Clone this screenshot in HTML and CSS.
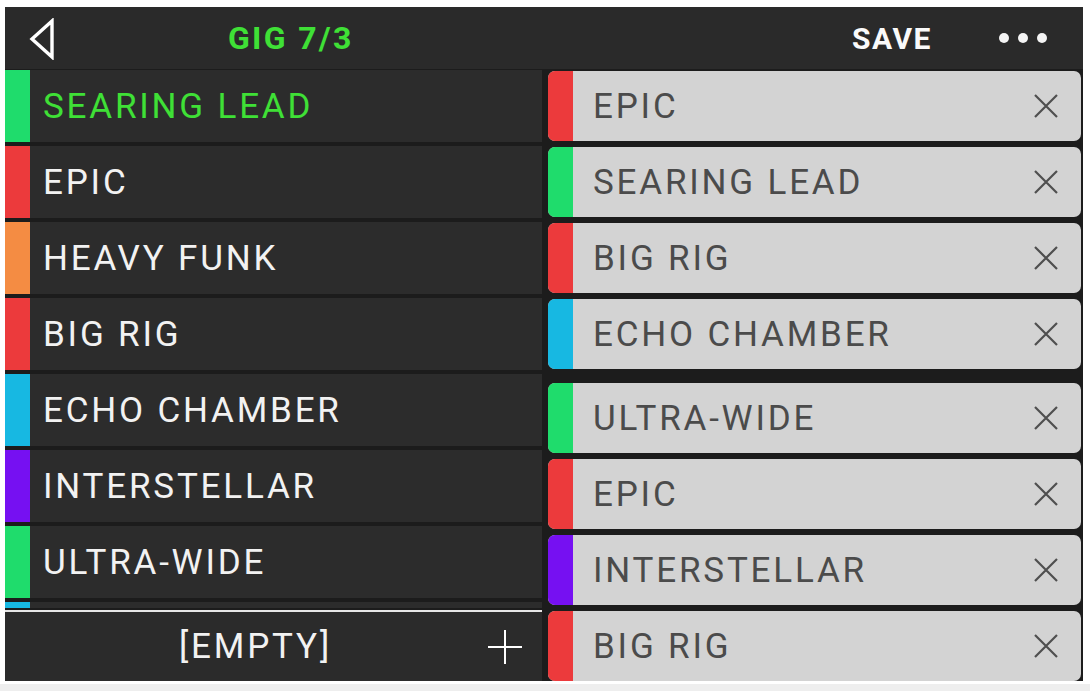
FILE: index.html
```html
<!DOCTYPE html>
<html>
<head>
<meta charset="utf-8">
<link rel="stylesheet" href="styles.css">
</head>
<body>
<div class="device">
  <header class="topbar">
    <div class="back">
      <svg width="28" height="42" viewBox="0 0 28 42"><path d="M24 3 L4 21 L24 39 Z" fill="none" stroke="#fff" stroke-width="3.4" stroke-linejoin="miter"/></svg>
    </div>
    <div class="title">GIG 7/3</div>
    <div class="save">SAVE</div>
    <div class="more"><span></span><span></span><span></span></div>
  </header>
  <main class="content">
    <section class="left">
      <div class="list">
        <div class="row active"><i class="bar green"></i><span>SEARING LEAD</span></div>
        <div class="row"><i class="bar red"></i><span>EPIC</span></div>
        <div class="row"><i class="bar orange"></i><span>HEAVY FUNK</span></div>
        <div class="row"><i class="bar red"></i><span>BIG RIG</span></div>
        <div class="row"><i class="bar cyan"></i><span>ECHO CHAMBER</span></div>
        <div class="row"><i class="bar purple"></i><span>INTERSTELLAR</span></div>
        <div class="row"><i class="bar green"></i><span>ULTRA-WIDE</span></div>
        <div class="row"><i class="bar cyan"></i></div>
      </div>
      <div class="divider"></div>
      <div class="add">
        <span class="empty">[EMPTY]</span>
        <svg class="plus" width="36" height="36" viewBox="0 0 36 36"><path d="M18 1 V35 M1 18 H35" stroke="#fff" stroke-width="2"/></svg>
      </div>
    </section>
    <section class="right">
      <div class="card"><i class="bar red"></i><span>EPIC</span><svg class="x" viewBox="0 0 26 26"><path d="M2 2 L24 24 M24 2 L2 24"/></svg></div>
      <div class="card"><i class="bar green"></i><span>SEARING LEAD</span><svg class="x" viewBox="0 0 26 26"><path d="M2 2 L24 24 M24 2 L2 24"/></svg></div>
      <div class="card"><i class="bar red"></i><span>BIG RIG</span><svg class="x" viewBox="0 0 26 26"><path d="M2 2 L24 24 M24 2 L2 24"/></svg></div>
      <div class="card"><i class="bar cyan"></i><span>ECHO CHAMBER</span><svg class="x" viewBox="0 0 26 26"><path d="M2 2 L24 24 M24 2 L2 24"/></svg></div>
      <div class="card spaced"><i class="bar green"></i><span>ULTRA-WIDE</span><svg class="x" viewBox="0 0 26 26"><path d="M2 2 L24 24 M24 2 L2 24"/></svg></div>
      <div class="card"><i class="bar red"></i><span>EPIC</span><svg class="x" viewBox="0 0 26 26"><path d="M2 2 L24 24 M24 2 L2 24"/></svg></div>
      <div class="card"><i class="bar purple"></i><span>INTERSTELLAR</span><svg class="x" viewBox="0 0 26 26"><path d="M2 2 L24 24 M24 2 L2 24"/></svg></div>
      <div class="card"><i class="bar red"></i><span>BIG RIG</span><svg class="x" viewBox="0 0 26 26"><path d="M2 2 L24 24 M24 2 L2 24"/></svg></div>
    </section>
  </main>
</div>
<div class="footer-strip"></div>
</body>
</html>
```
FILE: styles.css
```css
* { box-sizing: border-box; }
html, body { margin: 0; padding: 0; }
body {
  background: #ffffff;
  width: 1090px;
  height: 691px;
  overflow: hidden;
  font-family: Roboto, "Liberation Sans", sans-serif;
}
.device {
  margin: 7px 7px 0 5px;
  width: 1078px;
  height: 674px;
  background: #1c1c1c;
  display: flex;
  flex-direction: column;
}
.footer-strip {
  margin-top: 3px;
  height: 7px;
  background: #eeeeee;
}
.topbar {
  height: 62px;
  background: #2a2a2a;
  display: flex;
  align-items: center;
  flex-shrink: 0;
}
.back {
  width: 28px;
  margin-left: 23px;
  display: flex;
  align-items: center;
  padding-top: 2px;
}
.title {
  margin-left: 172px;
  color: #3fe036;
  font-weight: 700;
  font-size: 32px;
  letter-spacing: 2.3px;
}
.save {
  margin-left: auto;
  color: #fafafa;
  font-weight: 700;
  font-size: 30px;
  letter-spacing: 1.5px;
}
.more {
  display: flex;
  gap: 9px;
  margin-left: 67px;
  margin-right: 36px;
}
.more span {
  width: 10px;
  height: 10px;
  border-radius: 50%;
  background: #f4f4f4;
}
.content {
  flex: 1;
  display: flex;
  gap: 6px;
}
.left {
  width: 537px;
  display: flex;
  flex-direction: column;
}
.list {
  height: 539px;
  padding-top: 1px;
  overflow: hidden;
  display: flex;
  flex-direction: column;
  gap: 4px;
  flex-shrink: 0;
}
.row {
  height: 72px;
  flex-shrink: 0;
  background: #2c2c2c;
  display: flex;
  align-items: center;
  color: #f2f2f2;
  font-size: 35px;
  letter-spacing: 2.8px;
}
.row.active { color: #3fe036; }
.row span { margin-left: 13px; }
.bar {
  display: block;
  width: 25px;
  align-self: stretch;
  flex-shrink: 0;
}
.green { background: #1fdc6c; }
.red { background: #ec3a3c; }
.orange { background: #f48c43; }
.cyan { background: #17b8e2; }
.purple { background: #7610f2; }
.divider {
  margin-top: 2px;
  height: 2px;
  background: #e6e6e6;
}
.add {
  flex: 1;
  background: #2b2b2b;
  display: flex;
  align-items: center;
  color: #f2f2f2;
  font-size: 35px;
  letter-spacing: 2.8px;
}
.empty {
  margin-left: 174px;
}
.plus {
  margin-left: auto;
  margin-right: 19px;
}
.right {
  flex: 1;
  padding-top: 2px;
  padding-right: 2px;
  display: flex;
  flex-direction: column;
  gap: 6px;
}
.card {
  height: 70px;
  flex-shrink: 0;
  background: #d3d3d3;
  border-radius: 7px;
  overflow: hidden;
  display: flex;
  align-items: center;
  color: #4b4b4b;
  font-size: 35px;
  letter-spacing: 2.8px;
}
.card.spaced { margin-top: 8px; }
.card span { margin-left: 20px; }
.x {
  width: 26px;
  height: 26px;
  margin-left: auto;
  margin-right: 22px;
  fill: none;
  stroke: #4f4f4f;
  stroke-width: 2.2;
}
```
